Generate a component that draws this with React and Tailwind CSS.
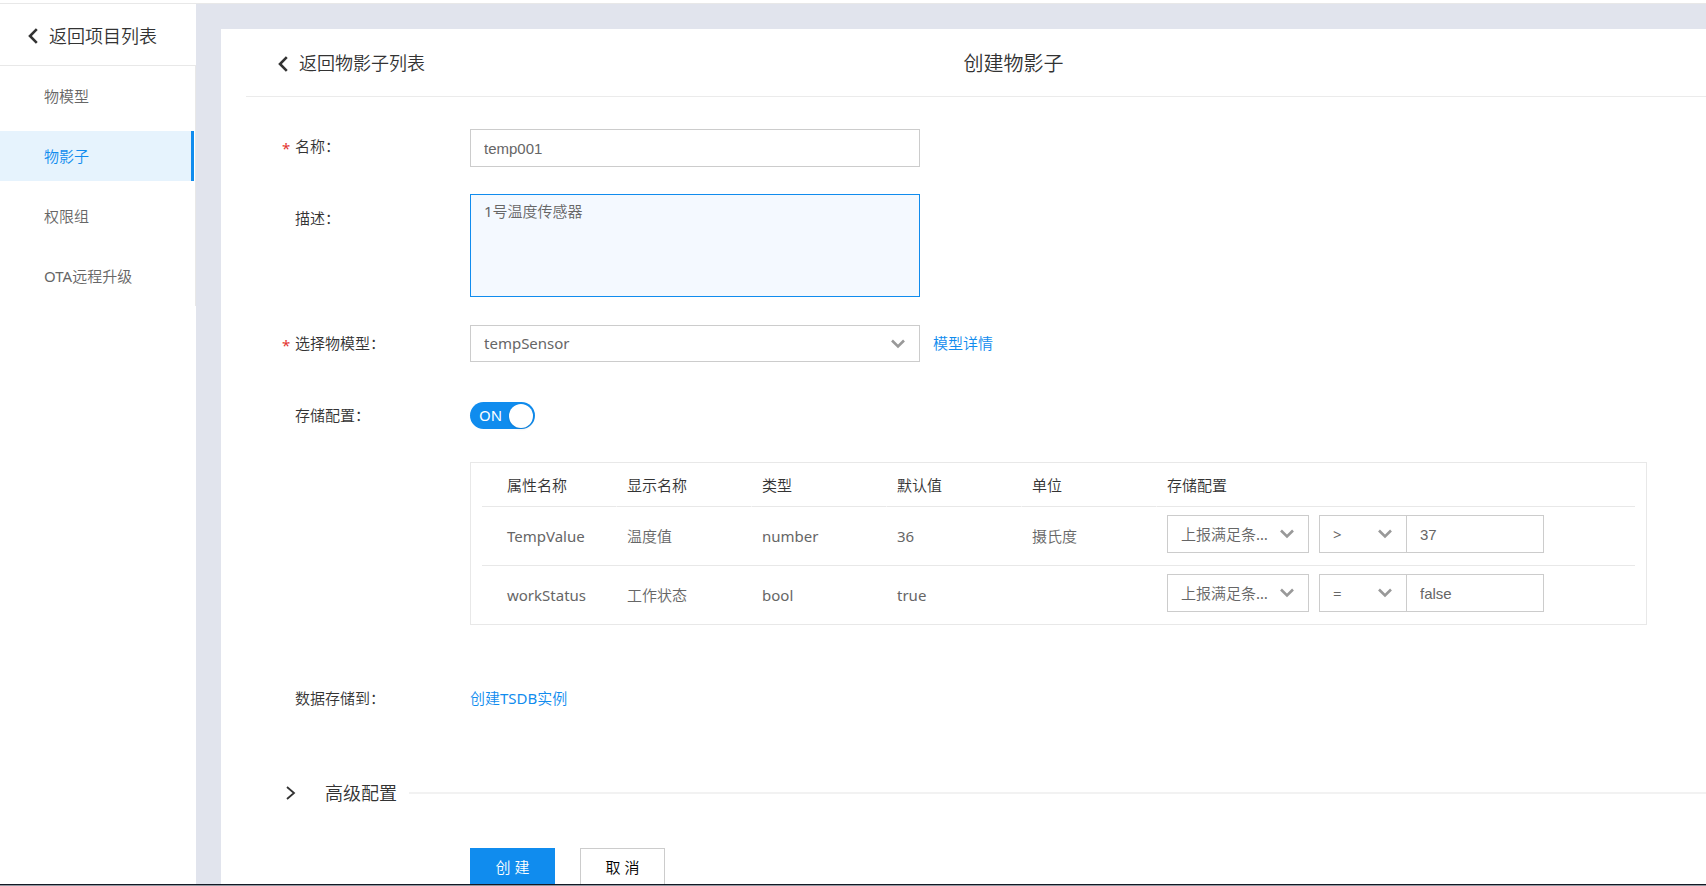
import React, { useState } from 'react';

const menuItems = [
  { id: 'model', label: '物模型' },
  { id: 'shadow', label: '物影子' },
  { id: 'permission', label: '权限组' },
  { id: 'ota', label: 'OTA远程升级' },
];

const columns = ['属性名称', '显示名称', '类型', '默认值', '单位', '存储配置'];

const properties = [
  { name: 'TempValue', display: '温度值', type: 'number', value: '36', unit: '摄氏度', operator: '>', threshold: '37' },
  { name: 'workStatus', display: '工作状态', type: 'bool', value: 'true', unit: '', operator: '=', threshold: 'false' },
];

const BackIcon = () => (
  <svg className="w-[10px] h-[16px] shrink-0 text-[#333]" viewBox="0 0 10 16" fill="none" stroke="currentColor" strokeWidth="2.6">
    <path d="M8.8 1.2 2 8l6.8 6.8" />
  </svg>
);

const Select = ({ id, label, options, className }) => (
  <div className={`relative ${className}`}>
    <select
      id={id}
      aria-label={label}
      className="block w-full h-full appearance-none rounded-none border border-[#ccc] bg-white pl-[13px] pr-[36px] text-[15px] text-[#666] text-ellipsis outline-none"
    >
      {options.map((option) => (
        <option key={option}>{option}</option>
      ))}
    </select>
    <svg
      className="pointer-events-none absolute right-[15px] top-1/2 w-[14px] h-[10px] -translate-y-1/2 text-[#999]"
      viewBox="0 0 14 10"
      fill="none"
      stroke="currentColor"
      strokeWidth="2.6"
    >
      <path d="M1 1.5l6 6 6-6" />
    </svg>
  </div>
);

const FormRow = ({ id, label, required, className, labelClass = '', children }) => (
  <div className={`flex ${className}`}>
    <label htmlFor={id} className={`flex w-[188px] shrink-0 text-[#333] leading-[24px] ${labelClass}`}>
      <span className="w-[13px] shrink-0 pt-[2px] text-[#e3342f]">{required ? '*' : ''}</span>
      {label}：
    </label>
    {children}
  </div>
);

const Sidebar = () => (
  <aside className="w-[196px] shrink-0 bg-white">
    <a href="#projects" className="flex h-[61px] items-center gap-[11px] pt-[3px] pl-[28px] text-[18px] text-[#333]">
      <BackIcon />
      返回项目列表
    </a>
    <nav className="flex flex-col gap-[10px] border-t border-r border-[#e8e8e8] pt-[5px] pb-[5px] pr-px">
      {menuItems.map((item) => (
        <a
          key={item.id}
          href={`#${item.id}`}
          className={
            item.id === 'shadow'
              ? 'flex h-[50px] items-center border-r-3 border-[#108cee] bg-[#e6f3fd] pl-[44px] text-[#108cee]'
              : 'flex h-[50px] items-center pl-[44px] text-[#666]'
          }
        >
          {item.label}
        </a>
      ))}
    </nav>
  </aside>
);

const PropertyTable = () => (
  <div className="mr-[59px] min-w-0 flex-1 border border-[#e8e8e8] px-[11px]">
    <table className="w-full table-fixed border-separate border-spacing-0 text-left">
      <colgroup>
        <col className="w-[135px]" />
        <col className="w-[135px]" />
        <col className="w-[135px]" />
        <col className="w-[135px]" />
        <col className="w-[135px]" />
        <col />
      </colgroup>
      <thead>
        <tr className="text-[#333]">
          {columns.map((column) => (
            <th
              key={column}
              className="h-[44px] border-r border-b border-r-white border-b-[#e8e8e8] p-0 pt-[2px] pl-[10px] font-normal first:pl-[25px] last:border-r-0"
            >
              {column}
            </th>
          ))}
        </tr>
      </thead>
      <tbody>
        {properties.map((item) => (
          <tr
            key={item.name}
            className="text-[#666] *:h-[59px] *:border-b *:border-[#e8e8e8] *:p-0 *:pl-[10px] *:first:pl-[25px] last:*:h-[58px] last:*:border-b-0"
          >
            <td>{item.name}</td>
            <td>{item.display}</td>
            <td>{item.type}</td>
            <td>{item.value}</td>
            <td>{item.unit}</td>
            <td>
              <div className="mb-[4px] flex items-center">
                <Select label={`${item.name} 存储策略`} options={['上报满足条件时存储']} className="w-[142px] h-[38px] mr-[10px]" />
                <Select label={`${item.name} 条件`} options={[item.operator]} className="w-[88px] h-[38px]" />
                <input
                  aria-label={`${item.name} 阈值`}
                  defaultValue={item.threshold}
                  className="-ml-px w-[138px] h-[38px] border border-[#ccc] px-[13px] font-['Liberation_Sans',sans-serif] text-[15px] text-[#666] outline-none"
                />
              </div>
            </td>
          </tr>
        ))}
      </tbody>
    </table>
  </div>
);

const App = () => {
  const [stored, setStored] = useState(true);

  return (
    <div className="flex h-screen flex-col overflow-hidden bg-white font-['Noto_Sans','Noto_Sans_CJK_SC_DemiLight','Noto_Sans_CJK_SC',sans-serif] text-[15px]">
      <div className="h-[4px] shrink-0 border-b border-[#e8e8e8]" />
      <div className="flex min-h-0 flex-1">
        <Sidebar />
        <main className="min-w-0 flex-1 overflow-hidden bg-[#e1e4ed] pl-[25px] pt-[25px]">
          <div className="min-h-full bg-white pl-[25px]">
            <header className="grid grid-cols-[1fr_auto_1fr] h-[68px] items-center border-b border-[#ebebeb] pt-[2px] pl-[32px]">
              <a href="#shadows" className="flex items-center gap-[11px] text-[18px] text-[#333]">
                <BackIcon />
                返回物影子列表
              </a>
              <h1 className="pl-[43px] text-[20px] text-[#333]">创建物影子</h1>
            </header>

            <form className="pl-[36px] pt-[32px]" onSubmit={(e) => e.preventDefault()}>
              <FormRow id="name" label="名称" required className="mb-[27px]" labelClass="pt-[5px]">
                <input
                  id="name"
                  defaultValue="temp001"
                  className="h-[38px] w-[450px] border border-[#ccc] px-[13px] font-['Liberation_Sans',sans-serif] text-[15px] text-[#666] outline-none"
                />
              </FormRow>

              <FormRow id="desc" label="描述" className="mb-[28px]" labelClass="pt-[12px]">
                <textarea
                  id="desc"
                  defaultValue="1号温度传感器"
                  className="block h-[103px] w-[450px] resize-none border border-[#108cee] bg-[#f4f9ff] px-[13px] py-[5px] leading-[22px] text-[#666] outline-none"
                />
              </FormRow>

              <FormRow id="model" label="选择物模型" required className="mb-[40px] items-center">
                <Select id="model" options={['tempSensor']} className="w-[450px] h-[37px]" />
                <a href="#detail" className="ml-[13px] text-[#108cee]">模型详情</a>
              </FormRow>

              <FormRow id="storage" label="存储配置" className="mb-[33px] items-center" labelClass="pb-[2px]">
                <button
                  id="storage"
                  type="button"
                  role="switch"
                  aria-checked={stored}
                  onClick={() => setStored(!stored)}
                  className="flex h-[27px] w-[65px] items-center justify-between rounded-full bg-[#108cee] pl-[9px] pr-[2px] text-[15px] text-white"
                >
                  {stored ? 'ON' : 'OFF'}
                  <span className="h-[24px] w-[24px] rounded-full bg-white shadow" />
                </button>
              </FormRow>

              <div className="mb-[61px] flex pl-[188px]">
                <PropertyTable />
              </div>

              <FormRow id="tsdb" label="数据存储到" className="mb-[69px]">
                <a id="tsdb" href="#tsdb" className="leading-[24px] text-[#108cee]">创建TSDB实例</a>
              </FormRow>

              <div className="mb-[41px] flex items-center">
                <button type="button" className="flex items-center text-[18px] leading-[28px] text-[#333]">
                  <svg className="mr-[29px] ml-[4px] h-[14px] w-[10px]" viewBox="0 0 10 14" fill="none" stroke="currentColor" strokeWidth="1.8">
                    <path d="M1 1l7 6-7 6" />
                  </svg>
                  高级配置
                </button>
                <span className="ml-[12px] h-[2px] flex-1 bg-[#f2f2f2]" />
              </div>

              <div className="flex gap-[25px] pl-[188px]">
                <button type="submit" className="h-[38px] w-[85px] bg-[#108cee] text-white">创 建</button>
                <button type="button" className="h-[38px] w-[85px] border border-[#ccc] bg-white text-black">取 消</button>
              </div>
            </form>
          </div>
        </main>
      </div>
      <div className="h-[2px] shrink-0 border-t border-[#141824] bg-[#9298a0]" />
    </div>
  );
};

export default App;
